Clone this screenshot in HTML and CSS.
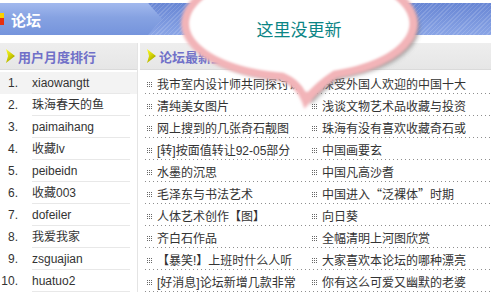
FILE: index.html
```html
<!DOCTYPE html>
<html lang="zh-CN">
<head>
  <meta charset="UTF-8" />
  <title>论坛</title>
  <link rel="stylesheet" href="styles.css">
</head>
<body>

  <div class="bar">
    <div class="bar-title"><span class="bar-icon"></span>论坛</div>
  </div>

  <div class="board">
    <div class="rank">
      <div class="head"><span class="arrow"></span>用户月度排行</div>
      <ol class="rank-list">
        <li class="on"><span class="num">1.</span><span class="name">xiaowangtt</span></li>
        <li><span class="num">2.</span><span class="name">珠海春天的鱼</span></li>
        <li><span class="num">3.</span><span class="name">paimaihang</span></li>
        <li><span class="num">4.</span><span class="name">收藏lv</span></li>
        <li><span class="num">5.</span><span class="name">peibeidn</span></li>
        <li><span class="num">6.</span><span class="name">收藏003</span></li>
        <li><span class="num">7.</span><span class="name">dofeiler</span></li>
        <li><span class="num">8.</span><span class="name">我爱我家</span></li>
        <li><span class="num">9.</span><span class="name">zsguajian</span></li>
        <li><span class="num">10.</span><span class="name">huatuo2</span></li>
      </ol>
    </div>

    <div class="latest">
      <div class="head"><span class="arrow"></span>论坛最新主题</div>
      <ul class="topics">
        <li><span class="cell"><i class="dot"></i>我市室内设计师共同探讨课</span><span class="cell"><i class="dot"></i>深受外国人欢迎的中国十大</span></li>
        <li><span class="cell"><i class="dot"></i>清纯美女图片</span><span class="cell"><i class="dot"></i>浅谈文物艺术品收藏与投资</span></li>
        <li><span class="cell"><i class="dot"></i>网上搜到的几张奇石靓图</span><span class="cell"><i class="dot"></i>珠海有没有喜欢收藏奇石或</span></li>
        <li><span class="cell"><i class="dot"></i>[转]按面值转让92-05部分</span><span class="cell"><i class="dot"></i>中国画要玄</span></li>
        <li><span class="cell"><i class="dot"></i>水墨的沉思</span><span class="cell"><i class="dot"></i>中国凡高沙耆</span></li>
        <li><span class="cell"><i class="dot"></i>毛泽东与书法艺术</span><span class="cell"><i class="dot"></i>中国进入<span class="q">“</span>泛裸体<span class="q">”</span>时期</span></li>
        <li><span class="cell"><i class="dot"></i>人体艺术创作【图】</span><span class="cell"><i class="dot"></i>向日葵</span></li>
        <li><span class="cell"><i class="dot"></i>齐白石作品</span><span class="cell"><i class="dot"></i>全幅清明上河图欣赏</span></li>
        <li><span class="cell"><i class="dot"></i>【暴笑!】上班时什么人听</span><span class="cell"><i class="dot"></i>大家喜欢本论坛的哪种漂亮</span></li>
        <li><span class="cell"><i class="dot"></i>[好消息]论坛新增几款非常</span><span class="cell"><i class="dot"></i>你有这么可爱又幽默的老婆</span></li>
      </ul>
    </div>
  </div>

  <!-- speech bubble lying over the page -->
  <svg class="bubble" width="491" height="292" viewBox="0 0 491 292">
    <defs>
      <filter id="soft" x="-20%" y="-20%" width="140%" height="140%">
        <feGaussianBlur stdDeviation="1.6"/>
      </filter>
      <filter id="shade" x="-20%" y="-20%" width="140%" height="140%">
        <feGaussianBlur stdDeviation="2.5"/>
      </filter>
    </defs>
    <path d="M282 76 Q300 84 306 100 Q318 86 335 74 A114 53 0 1 0 282 76 Z" fill="#555" opacity="0.6" transform="translate(5 4)" filter="url(#shade)"/>
    <path d="M282 76 Q300 84 306 100 Q318 86 335 74 A114 53 0 1 0 282 76 Z" fill="#fff" stroke="#f2b4b8" stroke-width="9" filter="url(#soft)"/>
    <path d="M284 72 Q300 78 306 92 Q316 80 333 70 A109 49 0 1 0 284 72 Z" fill="#fff" filter="url(#soft)"/>
    <text x="299" y="36" text-anchor="middle" class="bubble-text">这里没更新</text>
  </svg>

</body>
</html>
```

FILE: styles.css
```css
body {
  margin: 0;
  width: 491px;
  height: 292px;
  overflow: hidden;
  position: relative;
  background: #fff;
  font-family: "Liberation Sans", "Noto Sans CJK SC", sans-serif;
  font-size: 12px;
  color: #333;
}

.bar {
  margin-top: 3px;
  height: 32px;
  background:
    repeating-linear-gradient(135deg, rgba(255,255,255,0.14) 0 1px, transparent 1px 3px),
    linear-gradient(to bottom, #6886d4, #8aa5e6);
}

.bar-title {
  width: 162px;
  height: 32px;
  display: flex;
  align-items: center;
  gap: 7px;
  color: #fff;
  font-size: 15px;
  font-weight: bold;
  font-family: "Noto Sans CJK SC", sans-serif;
  background: linear-gradient(to bottom, #a2b9ee, #86a2e2 45%, #7594dc);
  clip-path: polygon(0 0, 148px 0, 162px 50%, 148px 100%, 0 100%);
}

.bar-icon {
  width: 4px;
  height: 12px;
  background: linear-gradient(to bottom, #f8d000 0 40%, #e83010 40%);
}

.board {
  display: flex;
  margin-top: 8px;
}

.rank {
  width: 137px;
  border-right: 1px solid #e4e4e4;
}

.latest {
  flex: 1;
}

.head {
  height: 26px;
  display: flex;
  align-items: center;
  gap: 3px;
  padding-left: 6px;
  background: linear-gradient(to bottom, #eeeeee, #e6e6e6);
  border-bottom: 1px solid #dadada;
  color: #7070c8;
  font-size: 13px;
  font-weight: bold;
  font-family: "Noto Sans CJK SC", sans-serif;
}

.latest .head {
  margin-left: 2px;
  padding-left: 7px;
}

.arrow {
  width: 9px;
  height: 14px;
  background: linear-gradient(135deg, #ffff30, #c8c800 55%, #7c7a00);
  clip-path: polygon(0 0, 100% 50%, 0 100%, 2px 50%);
}

.rank-list {
  list-style: none;
  margin: 2px 0 0;
  padding: 0;
}

.rank-list li {
  height: 22px;
  display: flex;
  align-items: center;
}

.rank-list li.on {
  background: #f3f3f3;
}

.num {
  width: 18px;
  text-align: right;
  margin-right: 14px;
}

.name {
  flex: 1;
  height: 21px;
  line-height: 22px;
  margin-right: 7px;
  border-bottom: 1px solid #e8e8e8;
}

.topics {
  list-style: none;
  margin: 2px 0 0 7px;
  padding: 0;
}

.topics li {
  height: 22px;
  display: flex;
  align-items: center;
  background: linear-gradient(to right, #8e8e8e 1px, transparent 1px) left bottom / 4px 1px repeat-x;
}

.cell {
  display: block;
  padding-left: 2px;
  white-space: nowrap;
  overflow: hidden;
}

.cell:first-child {
  width: 163px;
  flex: none;
}

.q {
  font-family: "Noto Sans CJK SC", sans-serif;
}

.dot {
  display: inline-block;
  vertical-align: middle;
  margin: -2px 5px 0 0;
  width: 5px;
  height: 5px;
  background: repeating-linear-gradient(90deg, #666 0 1px, transparent 1px 2px);
  -webkit-mask-image: repeating-linear-gradient(0deg, #000 0 1px, transparent 1px 2px);
  mask-image: repeating-linear-gradient(0deg, #000 0 1px, transparent 1px 2px);
}

.bubble {
  position: absolute;
  left: 0;
  top: 0;
  pointer-events: none;
}

.bubble-text {
  font-family: "Noto Sans CJK SC", sans-serif;
  font-size: 17px;
  fill: #0b8585;
}
```
